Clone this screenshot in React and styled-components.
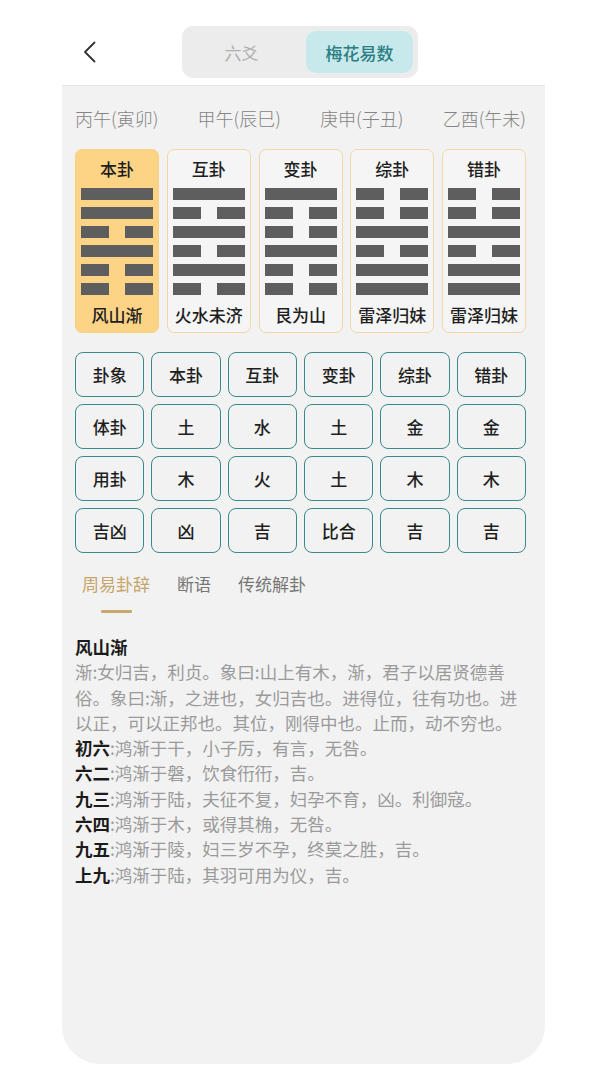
import React from "react";
import styled, { createGlobalStyle } from "styled-components";

const GlobalStyle = createGlobalStyle`
  * { box-sizing: border-box; }
  html, body { margin: 0; padding: 0; background: #ffffff; }
  body {
    font-family: "Noto Sans CJK SC", "Noto Sans", sans-serif;
    -webkit-font-smoothing: antialiased;
  }
`;

const Page = styled.div`
  width: 607px;
  min-height: 1080px;
  background: #ffffff;
`;

const Header = styled.header`
  height: 85px;
  display: flex;
  align-items: flex-start;
  padding-top: 26px;
  padding-left: 78px;
`;

const BackButton = styled.button`
  width: 24px;
  height: 52px;
  padding: 0;
  border: none;
  background: transparent;
  display: flex;
  align-items: center;
  justify-content: center;
  cursor: pointer;
`;

const Segmented = styled.div`
  margin-left: 80px;
  width: 236px;
  height: 52px;
  background: #ececec;
  border-radius: 11px;
  display: flex;
  align-items: center;
  padding: 5px;
`;

const Segment = styled.div`
  flex: ${(p) => (p.$active ? "0 0 107px" : "1")};
  height: 42px;
  border-radius: 10px;
  display: flex;
  align-items: center;
  justify-content: center;
  padding-right: ${(p) => (p.$active ? 0 : 10)}px;
  font-size: 17px;
  color: ${(p) => (p.$active ? "#2b7e84" : "#b0b0b0")};
  background: ${(p) => (p.$active ? "#c8e9ec" : "transparent")};
  font-weight: ${(p) => (p.$active ? 500 : 400)};
`;

const Panel = styled.main`
  margin: 0 62px;
  min-height: 979px;
  background: #f2f2f2;
  border-top: 1px solid #e7e7e7;
  border-radius: 0 0 38px 38px;
  padding: 20px 19px 40px 13px;
`;

const DateRow = styled.div`
  display: flex;
  justify-content: space-between;
  line-height: 24px;
  font-size: 18px;
  font-weight: 300;
  color: #848484;
`;

const CardRow = styled.div`
  margin-top: 19px;
  display: grid;
  grid-template-columns: repeat(5, 1fr);
  column-gap: 7.75px;
`;

const Card = styled.div`
  height: 184px;
  border-radius: 7px;
  border: 1px solid ${(p) => (p.$active ? "#fcd081" : "#f4d7a4")};
  background: ${(p) => (p.$active ? "#fdd386" : "#f5f5f5")};
  padding: 7px 0 6px;
  display: flex;
  flex-direction: column;
  align-items: center;
`;

const CardLabel = styled.div`
  line-height: 24px;
  font-size: 17px;
  font-weight: 500;
  color: #1e1e1e;
  margin-top: ${(p) => p.$top || 0}px;
`;

const Lines = styled.div`
  margin-top: 7px;
  width: 72px;
  display: flex;
  flex-direction: column;
  gap: 7px;
`;

const Yao = styled.div`
  height: 12px;
  display: flex;
  justify-content: space-between;
`;

const YaoPart = styled.span`
  display: block;
  height: 12px;
  width: ${(p) => (p.$full ? "72px" : "28px")};
  background: #5e5e5e;
`;

const Grid = styled.div`
  margin-top: 19px;
  display: grid;
  grid-template-columns: repeat(6, 1fr);
  column-gap: 7px;
  row-gap: 7px;
`;

const Cell = styled.div`
  height: 45px;
  border: 1.5px solid #388a8b;
  border-radius: 8px;
  display: flex;
  align-items: center;
  justify-content: center;
  font-size: 17px;
  font-weight: 500;
  color: #1e1e1e;
`;

const Tabs = styled.div`
  margin-top: 19px;
  padding-left: 7px;
  display: flex;
  gap: 27px;
`;

const Tab = styled.div`
  display: flex;
  flex-direction: column;
  align-items: center;
  font-size: 17px;
  line-height: 24px;
  color: ${(p) => (p.$active ? "#c6a46b" : "#767676")};

  &::after {
    content: "";
    display: block;
    margin-top: 14px;
    width: 31px;
    height: 3px;
    border-radius: 1px;
    background: ${(p) => (p.$active ? "#c9a86c" : "transparent")};
  }
`;

const Article = styled.article`
  margin-top: 21px;
  font-size: 17.5px;
  line-height: 25.3px;
  color: #9a9a9a;
`;

const ArticleTitle = styled.div`
  font-weight: 700;
  color: #1b1b1b;
`;

const Para = styled.p`
  margin: 0;
`;

const Lead = styled.span`
  font-weight: 700;
  color: #1b1b1b;
`;

const Chevron = () => (
  <svg width="16" height="24" viewBox="0 0 16 24" fill="none">
    <path d="M12.5 2.5 L3 12 L12.5 21.5" stroke="#333" strokeWidth="1.8" strokeLinecap="round" strokeLinejoin="round" />
  </svg>
);

// 1 = yang (solid), 0 = yin (broken); listed top to bottom
const hexagrams = [
  { title: "本卦", name: "风山渐", lines: [1, 1, 0, 1, 0, 0], active: true },
  { title: "互卦", name: "火水未济", lines: [1, 0, 1, 0, 1, 0] },
  { title: "变卦", name: "艮为山", lines: [1, 0, 0, 1, 0, 0] },
  { title: "综卦", name: "雷泽归妹", lines: [0, 0, 1, 0, 1, 1] },
  { title: "错卦", name: "雷泽归妹", lines: [0, 0, 1, 0, 1, 1] },
];

const table = [
  ["卦象", "本卦", "互卦", "变卦", "综卦", "错卦"],
  ["体卦", "土", "水", "土", "金", "金"],
  ["用卦", "木", "火", "土", "木", "木"],
  ["吉凶", "凶", "吉", "比合", "吉", "吉"],
];

const dates = ["丙午(寅卯)", "甲午(辰巳)", "庚申(子丑)", "乙酉(午未)"];

const yaoText = [
  ["初六", ":鸿渐于干，小子厉，有言，无咎。"],
  ["六二", ":鸿渐于磐，饮食衎衎，吉。"],
  ["九三", ":鸿渐于陆，夫征不复，妇孕不育，凶。利御寇。"],
  ["六四", ":鸿渐于木，或得其桷，无咎。"],
  ["九五", ":鸿渐于陵，妇三岁不孕，终莫之胜，吉。"],
  ["上九", ":鸿渐于陆，其羽可用为仪，吉。"],
];

export default function App() {
  return (
    <Page>
      <GlobalStyle />
      <Header>
        <BackButton aria-label="返回">
          <Chevron />
        </BackButton>
        <Segmented>
          <Segment>六爻</Segment>
          <Segment $active>梅花易数</Segment>
        </Segmented>
      </Header>
      <Panel>
        <DateRow>
          {dates.map((d) => (
            <span key={d}>{d}</span>
          ))}
        </DateRow>
        <CardRow>
          {hexagrams.map((h) => (
            <Card key={h.title} $active={h.active}>
              <CardLabel>{h.title}</CardLabel>
              <Lines>
                {h.lines.map((l, i) => (
                  <Yao key={i}>
                    {l ? (
                      <YaoPart $full />
                    ) : (
                      <>
                        <YaoPart />
                        <YaoPart />
                      </>
                    )}
                  </Yao>
                ))}
              </Lines>
              <CardLabel $top={8}>{h.name}</CardLabel>
            </Card>
          ))}
        </CardRow>
        <Grid>
          {table.flat().map((t, i) => (
            <Cell key={i}>{t}</Cell>
          ))}
        </Grid>
        <Tabs>
          <Tab $active>周易卦辞</Tab>
          <Tab>断语</Tab>
          <Tab>传统解卦</Tab>
        </Tabs>
        <Article>
          <ArticleTitle>风山渐</ArticleTitle>
          <Para>
            渐:女归吉，利贞。象曰:山上有木，渐，君子以居贤德善俗。象曰:渐，之进也，女归吉也。进得位，往有功也。进以正，可以正邦也。其位，刚得中也。止而，动不穷也。
          </Para>
          {yaoText.map(([lead, rest]) => (
            <Para key={lead}>
              <Lead>{lead}</Lead>
              {rest}
            </Para>
          ))}
        </Article>
      </Panel>
    </Page>
  );
}
